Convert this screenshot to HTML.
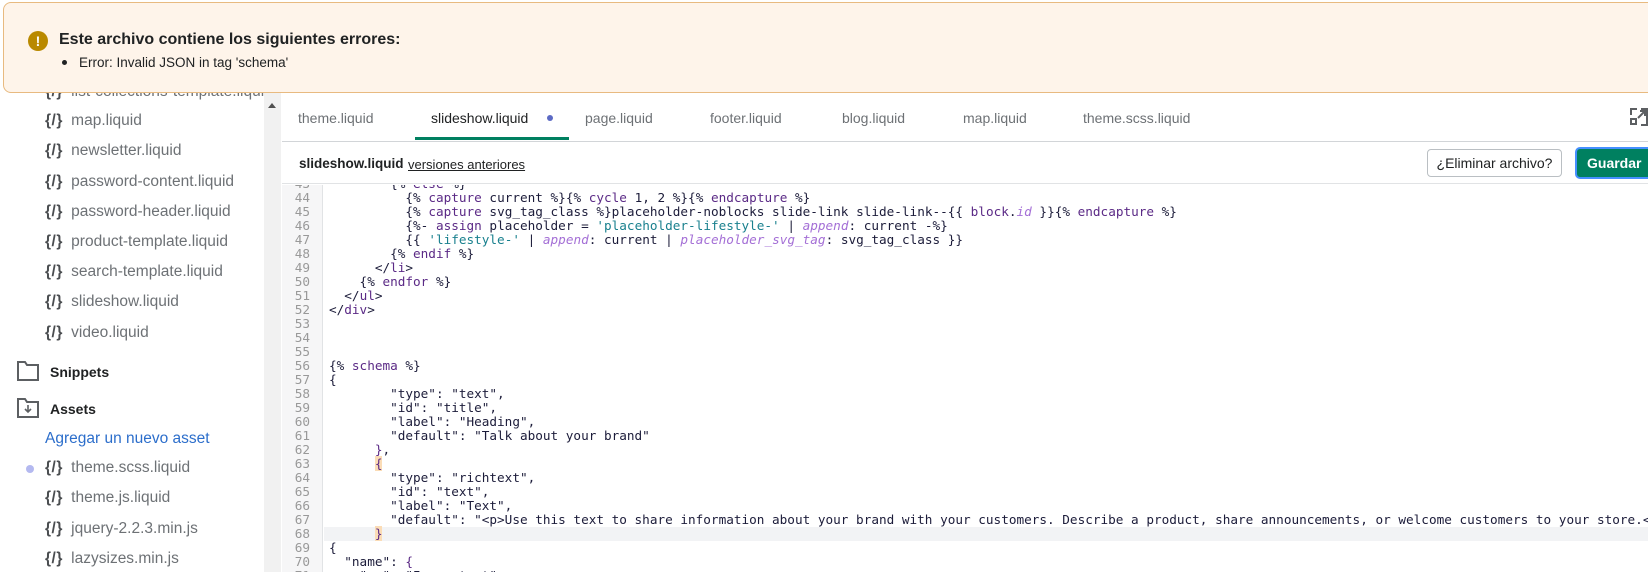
<!DOCTYPE html>
<html><head><meta charset="utf-8">
<style>
*{margin:0;padding:0;box-sizing:border-box}
body{width:1648px;height:572px;overflow:hidden;background:#fff;font-family:"Liberation Sans",sans-serif;position:relative;color:#202223}
.banner{position:absolute;left:3px;top:2px;width:1700px;height:91px;background:#fef4ea;border:1px solid #e8ba80;border-radius:8px;z-index:5}
.banner .ic{position:absolute;left:24px;top:28px;width:20px;height:20px;border-radius:50%;background:#b98900;color:#fff;font-weight:bold;font-size:14px;text-align:center;line-height:20px}
.banner .t{position:absolute;left:55px;top:28px;font-size:16px;font-weight:bold;color:#202223}
.banner .b{position:absolute;left:55px;top:52px;font-size:13.5px;color:#202223}
.banner .b:before{content:"";display:inline-block;width:5px;height:5px;border-radius:50%;background:#202223;margin:0 12px 2px 3px;vertical-align:middle}
.side{position:absolute;left:0;top:0;width:264px;height:572px;background:#fff}
.it{position:absolute;left:45px;font-size:15.5px;color:#6d7175;white-space:nowrap;line-height:20px}
.it b{color:#4a4d50;font-weight:bold;margin-right:4px;letter-spacing:0.5px}
.sb{position:absolute;left:264px;top:93px;width:17px;height:479px;background:#f1f1f1}
.sb:before{content:"";position:absolute;left:4px;top:10px;border-left:4px solid transparent;border-right:4px solid transparent;border-bottom:5px solid #505050}
.tabs{position:absolute;left:282px;top:93px;right:0;height:49px;border-bottom:1px solid #d2d5d8}
.tab{position:absolute;top:17px;font-size:14px;color:#6d7175}
.hdr{position:absolute;left:282px;top:142px;right:0;height:42px;border-bottom:1px solid #e1e3e5}
.btn1{position:absolute;left:1427px;top:149px;width:135px;height:28px;border:1px solid #babfc3;border-radius:4px;font-size:14px;text-align:center;line-height:26px;color:#202223;background:#fff}
.btn2{position:absolute;left:1575px;top:147px;width:90px;height:32px;border:2px solid #458fff;border-radius:5px;background:#008060;color:#fff;font-weight:bold;font-size:14px;line-height:28px;padding-left:10px}
.code{position:absolute;left:282px;top:185px;right:0;bottom:0;overflow:hidden}
.gut{position:absolute;left:0;top:0;width:41px;height:100%;background:#f6f6f7;border-right:1px solid #e1e3e5}
.lines{position:absolute;left:0;top:-8px;right:0;font-family:"DejaVu Sans Mono",monospace;font-size:12.7px}
.l{height:14px;line-height:14px;white-space:pre;position:relative}
.l .n{position:absolute;left:0;width:28px;text-align:right;color:#999}
.l .c{position:absolute;left:47px;color:#1c1c3a}
.act{background:#f2f3f5;margin-left:42px}
.act .n{left:-42px}.act .c{left:5px}
.k{color:#5b2a86}.s{color:#19808e}.f{color:#a46fd6;font-style:italic}.p{color:#1c1c3a}
.br{background:#fbdcb6}
</style></head><body>
<div class="side">
<div class="it" style="top:82px"><b>{/}</b> list-collections-template.liquid</div>
<div class="it" style="top:111px"><b>{/}</b> map.liquid</div>
<div class="it" style="top:141px"><b>{/}</b> newsletter.liquid</div>
<div class="it" style="top:172px"><b>{/}</b> password-content.liquid</div>
<div class="it" style="top:202px"><b>{/}</b> password-header.liquid</div>
<div class="it" style="top:232px"><b>{/}</b> product-template.liquid</div>
<div class="it" style="top:262px"><b>{/}</b> search-template.liquid</div>
<div class="it" style="top:292px"><b>{/}</b> slideshow.liquid</div>
<div class="it" style="top:323px"><b>{/}</b> video.liquid</div>
<svg style="position:absolute;left:17px;top:361px" width="22" height="20" viewBox="0 0 22 20" fill="none" stroke="#5c5f62" stroke-width="2"><path d="M1 1h7l2 3h11v15H1z"/></svg>
<div class="it" style="top:362px;left:50px;color:#202223;font-weight:bold;font-size:14px">Snippets</div>
<svg style="position:absolute;left:17px;top:398px" width="22" height="20" viewBox="0 0 22 20" fill="none" stroke="#5c5f62" stroke-width="2"><path d="M1 1h7l2 3h11v15H1z"/><path d="M11 7v7M8 11l3 3 3-3" stroke-width="1.6"/></svg>
<div class="it" style="top:399px;left:50px;color:#202223;font-weight:bold;font-size:14px">Assets</div>
<div class="it" style="top:429px;color:#2c6ecb">Agregar un nuevo asset</div>
<div style="position:absolute;left:26px;top:465px;width:8px;height:8px;border-radius:50%;background:#b4b9f0"></div>
<div class="it" style="top:458px"><b>{/}</b> theme.scss.liquid</div>
<div class="it" style="top:488px"><b>{/}</b> theme.js.liquid</div>
<div class="it" style="top:519px"><b>{/}</b> jquery-2.2.3.min.js</div>
<div class="it" style="top:549px"><b>{/}</b> lazysizes.min.js</div>
</div>
<div class="sb"></div>
<div class="banner"><div class="ic">!</div><div class="t">Este archivo contiene los siguientes errores:</div><div class="b">Error: Invalid JSON in tag 'schema'</div></div>
<div class="tabs">
<div class="tab" style="left:16px">theme.liquid</div>
<div class="tab" style="left:149px;color:#202223">slideshow.liquid</div>
<div style="position:absolute;left:265px;top:22px;width:6px;height:6px;border-radius:50%;background:#5c6ac4"></div>
<div style="position:absolute;left:133px;top:44px;width:154px;height:3px;background:#008060"></div>
<div class="tab" style="left:303px">page.liquid</div>
<div class="tab" style="left:428px">footer.liquid</div>
<div class="tab" style="left:560px">blog.liquid</div>
<div class="tab" style="left:681px">map.liquid</div>
<div class="tab" style="left:801px">theme.scss.liquid</div>
<svg style="position:absolute;left:1347px;top:14px" width="20" height="20" viewBox="0 0 20 20" fill="none" stroke="#5c5f62" stroke-width="2"><path d="M2 8V2h6M12 2h6v16h-6M2 11v7"/><rect x="2" y="12" width="5" height="5"/><path d="M9 11l7-7M11 4h5v5"/></svg>
</div>
<div class="hdr">
<div style="position:absolute;left:17px;top:14px;font-size:13.5px;font-weight:bold">slideshow.liquid</div>
<div style="position:absolute;left:126px;top:15px;font-size:13px;text-decoration:underline">versiones anteriores</div>
</div>
<div class="btn1">¿Eliminar archivo?</div>
<div class="btn2">Guardar</div>
<div class="code"><div class="gut"></div><div class="lines">
<div class="l"><span class="n">43</span><span class="c">        <span class="p">{%</span> <span class="k">else</span> %}</span></div>
<div class="l"><span class="n">44</span><span class="c">          {% <span class="k">capture</span> current %}{% <span class="k">cycle</span> 1, 2 %}{% <span class="k">endcapture</span> %}</span></div>
<div class="l"><span class="n">45</span><span class="c">          {% <span class="k">capture</span> svg_tag_class %}placeholder-noblocks slide-link slide-link--{{ <span class="k">block</span>.<span class="f">id</span> }}{% <span class="k">endcapture</span> %}</span></div>
<div class="l"><span class="n">46</span><span class="c">          {%- <span class="k">assign</span> placeholder = <span class="s">'placeholder-lifestyle-'</span> | <span class="f">append</span>: current -%}</span></div>
<div class="l"><span class="n">47</span><span class="c">          {{ <span class="s">'lifestyle-'</span> | <span class="f">append</span>: current | <span class="f">placeholder_svg_tag</span>: svg_tag_class }}</span></div>
<div class="l"><span class="n">48</span><span class="c">        {% <span class="k">endif</span> %}</span></div>
<div class="l"><span class="n">49</span><span class="c">      &lt;/<span class="k">li</span>&gt;</span></div>
<div class="l"><span class="n">50</span><span class="c">    {% <span class="k">endfor</span> %}</span></div>
<div class="l"><span class="n">51</span><span class="c">  &lt;/<span class="k">ul</span>&gt;</span></div>
<div class="l"><span class="n">52</span><span class="c">&lt;/<span class="k">div</span>&gt;</span></div>
<div class="l"><span class="n">53</span></div>
<div class="l"><span class="n">54</span></div>
<div class="l"><span class="n">55</span></div>
<div class="l"><span class="n">56</span><span class="c">{% <span class="k">schema</span> %}</span></div>
<div class="l"><span class="n">57</span><span class="c">{</span></div>
<div class="l"><span class="n">58</span><span class="c">        "type": "text",</span></div>
<div class="l"><span class="n">59</span><span class="c">        "id": "title",</span></div>
<div class="l"><span class="n">60</span><span class="c">        "label": "Heading",</span></div>
<div class="l"><span class="n">61</span><span class="c">        "default": "Talk about your brand"</span></div>
<div class="l"><span class="n">62</span><span class="c">      <span class="k">}</span>,</span></div>
<div class="l"><span class="n">63</span><span class="c">      <span class="br k">{</span></span></div>
<div class="l"><span class="n">64</span><span class="c">        "type": "richtext",</span></div>
<div class="l"><span class="n">65</span><span class="c">        "id": "text",</span></div>
<div class="l"><span class="n">66</span><span class="c">        "label": "Text",</span></div>
<div class="l"><span class="n">67</span><span class="c">        "default": "&lt;p&gt;Use this text to share information about your brand with your customers. Describe a product, share announcements, or welcome customers to your store.&lt;/p&gt;"</span></div>
<div class="l act"><span class="n">68</span><span class="c">      <span class="br k">}</span></span></div>
<div class="l"><span class="n">69</span><span class="c">{</span></div>
<div class="l"><span class="n">70</span><span class="c">  "name": <span class="k">{</span></span></div>
<div class="l"><span class="n">71</span><span class="c">    "en": "Image text"</span></div>
</div></div>
</body></html>
